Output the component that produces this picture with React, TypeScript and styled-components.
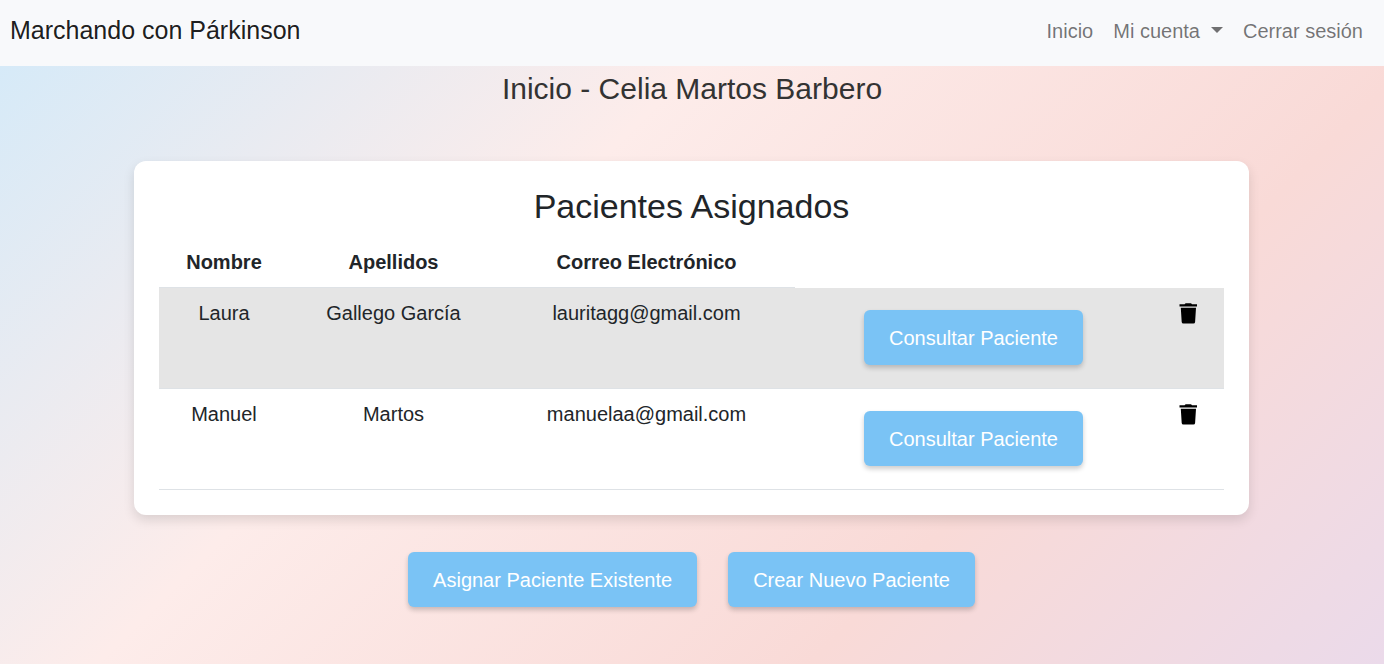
import React from "react";
import styled, { createGlobalStyle } from "styled-components";

const GlobalStyle = createGlobalStyle`
  *, *::before, *::after { box-sizing: border-box; }
  body {
    margin: 0;
    font-family: "Liberation Sans", Arial, sans-serif;
    font-size: 20px;
    line-height: 30px;
    color: #212529;
  }
`;

const Page = styled.div`
  display: flex;
  flex-direction: column;
  min-height: 100vh;
`;

const Main = styled.main`
  flex: 1;
  background: linear-gradient(135deg, #d6eaf8 0%, #fdecea 35%, #f9dad7 71%, #e8daee 106%);
`;

const Navbar = styled.nav`
  display: flex;
  align-items: center;
  justify-content: space-between;
  padding: 6px 11px 10px 10px;
  background: #f8f9fb;
`;

const Brand = styled.a`
  padding-bottom: 2px;
  font-size: 25px;
  color: rgba(0, 0, 0, 0.9);
  text-decoration: none;
`;

const NavList = styled.ul`
  display: flex;
  margin: 0;
  padding: 0;
  list-style: none;
`;

const NavLink = styled.a<{ $dropdown?: boolean }>`
  display: flex;
  align-items: center;
  gap: 11px;
  padding: 10px;
  color: rgba(0, 0, 0, 0.55);
  text-decoration: none;

  &::after {
    content: "";
    display: ${(p) => (p.$dropdown ? "block" : "none")};
    margin-bottom: 2px;
    border: 6px solid transparent;
    border-top-color: currentColor;
    border-bottom: 0;
  }
`;

const Title = styled.h1`
  margin: 4px 0 54px;
  font-size: 30px;
  line-height: 37px;
  font-weight: 400;
  text-align: center;
  color: #333;
`;

const Card = styled.section`
  margin: 0 135px 0 134px;
  padding: 25px;
  border-radius: 12px;
  background: #fff;
  box-shadow: 0 5px 12px rgba(0, 0, 0, 0.12);
`;

const CardTitle = styled.h2`
  margin: 0 0 10px;
  font-size: 34px;
  line-height: 41px;
  font-weight: 400;
  text-align: center;
`;

const Table = styled.table`
  width: 100%;
  table-layout: fixed;
  border-collapse: separate;
  border-spacing: 0;
  text-align: center;
`;

const Column = styled.col<{ $width: number }>`
  width: ${(p) => p.$width}px;
`;

const HeadCell = styled.th`
  padding: 10px;
  font-weight: 700;
  border-bottom: 1px solid #dee2e6;
`;

const Cell = styled.td`
  padding: 10px;
  vertical-align: top;
  border-bottom: 1px solid #dee2e6;
`;

const Row = styled.tr`
  &:nth-child(odd) {
    background: #e5e5e5;
  }
`;

const Button = styled.button`
  padding: 13px 25px 12px;
  border: 0;
  border-radius: 6px;
  background: #7ac3f5;
  color: #fff;
  font: inherit;
  box-shadow: 0 3px 5px rgba(0, 0, 0, 0.2);
  cursor: pointer;
`;

const RowAction = styled.div`
  display: flex;
  justify-content: center;
  padding: 12px 0 13px;
`;

const IconButton = styled.button`
  display: block;
  margin: 0 auto;
  padding: 4px 0;
  border: 0;
  background: none;
  color: #000;
  line-height: 0;
  cursor: pointer;
`;

const Actions = styled.div`
  display: flex;
  flex-wrap: wrap;
  justify-content: center;
  gap: 31px;
  padding: 37px 1px 57px 0;
`;

const TrashIcon = () => (
  <svg width="20" height="22" viewBox="0 0 20 22" fill="currentColor" aria-hidden="true">
    <path d="M6.6 2.2 Q7.2 1.3 8 1.3H12.6Q13.4 1.3 14 2.2H19V4.6H1.5V2.2z" />
    <path d="M2.8 5.8H18L17.1 19.9Q17 21.6 15.4 21.6H5.4Q3.8 21.6 3.7 19.9z" />
  </svg>
);

const patients = [
  { name: "Laura", surname: "Gallego García", email: "lauritagg@gmail.com" },
  { name: "Manuel", surname: "Martos", email: "manuelaa@gmail.com" },
];

const columnWidths = [130, 209, 297, 357, 72];

export default function App() {
  return (
    <Page>
      <GlobalStyle />
      <Navbar>
        <Brand href="#">Marchando con Párkinson</Brand>
        <NavList>
          <li><NavLink href="#">Inicio</NavLink></li>
          <li><NavLink href="#" $dropdown>Mi cuenta</NavLink></li>
          <li><NavLink href="#">Cerrar sesión</NavLink></li>
        </NavList>
      </Navbar>
      <Main>
        <Title>Inicio - Celia Martos Barbero</Title>
        <Card>
          <CardTitle>Pacientes Asignados</CardTitle>
          <Table>
            <colgroup>
              {columnWidths.map((width) => <Column key={width} $width={width} />)}
            </colgroup>
            <thead>
              <tr>
                <HeadCell scope="col">Nombre</HeadCell>
                <HeadCell scope="col">Apellidos</HeadCell>
                <HeadCell scope="col">Correo Electrónico</HeadCell>
              </tr>
            </thead>
            <tbody>
              {patients.map((p) => (
                <Row key={p.email}>
                  <Cell>{p.name}</Cell>
                  <Cell>{p.surname}</Cell>
                  <Cell>{p.email}</Cell>
                  <Cell>
                    <RowAction><Button type="button">Consultar Paciente</Button></RowAction>
                  </Cell>
                  <Cell>
                    <IconButton type="button" aria-label={`Eliminar a ${p.name}`}>
                      <TrashIcon />
                    </IconButton>
                  </Cell>
                </Row>
              ))}
            </tbody>
          </Table>
        </Card>
        <Actions>
          <Button type="button">Asignar Paciente Existente</Button>
          <Button type="button">Crear Nuevo Paciente</Button>
        </Actions>
      </Main>
    </Page>
  );
}
